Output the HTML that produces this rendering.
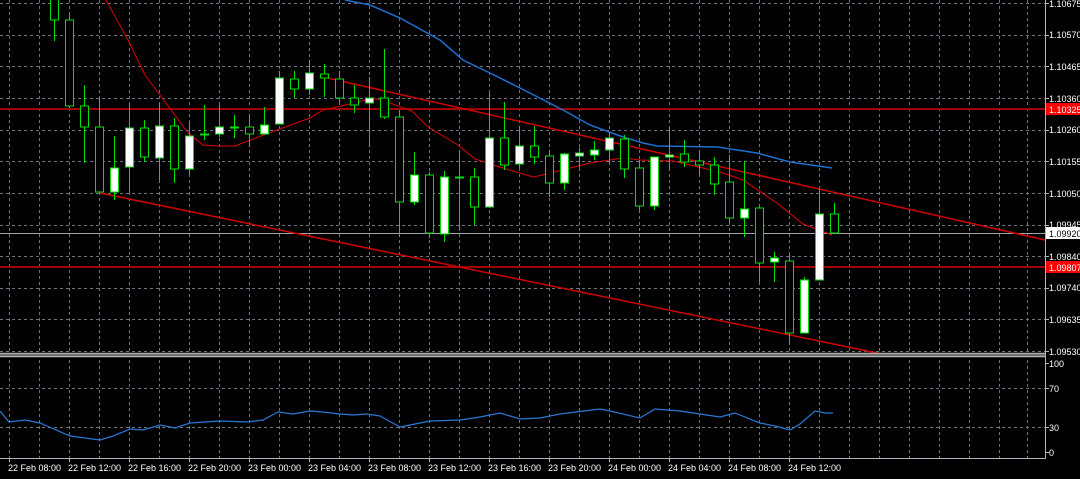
<!DOCTYPE html>
<html><head><meta charset="utf-8"><style>
html,body{margin:0;padding:0;background:#000;}
svg{display:block;}
text{font-family:"Liberation Sans",sans-serif;font-size:9px;fill:#fff;}
.t{font-size:9px;}
</style></head><body>
<svg width="1080" height="479" viewBox="0 0 1080 479" xmlns="http://www.w3.org/2000/svg">
<rect width="1080" height="479" fill="#000"/>
<g stroke="#6c7480" stroke-width="1" stroke-dasharray="3,3">
<path d="M0 3.5H1045M0 35.5H1045M0 66.5H1045M0 98.5H1045M0 130.5H1045M0 161.5H1045M0 193.5H1045M0 225.5H1045M0 256.5H1045M0 288.5H1045M0 319.5H1045M0 351.5H1045M0 388.5H1045M0 427.5H1045"/>
<path d="M9.5 0V458M39.5 0V458M69.5 0V458M99.5 0V458M129.5 0V458M159.5 0V458M189.5 0V458M219.5 0V458M249.5 0V458M279.5 0V458M309.5 0V458M339.5 0V458M369.5 0V458M399.5 0V458M429.5 0V458M459.5 0V458M489.5 0V458M519.5 0V458M549.5 0V458M579.5 0V458M609.5 0V458M639.5 0V458M669.5 0V458M699.5 0V458M729.5 0V458M759.5 0V458M789.5 0V458M819.5 0V458M849.5 0V458M879.5 0V458M909.5 0V458M939.5 0V458M969.5 0V458M999.5 0V458M1027.5 0V458"/>
</g>
<path d="M0 109H1045M0 267H1045" stroke="#a00000" stroke-width="2"/>
<path d="M0 233.5H1045" stroke="#a0a4a8" stroke-width="1"/>
<path d="M323 77L1045 240" stroke="#d00000" stroke-width="1.5" fill="none"/>
<path d="M100 193L882 354" stroke="#d00000" stroke-width="1.5" fill="none"/>
<path d="M345 0L370 5L400 18L440 40L463 60L490 73L520 88L563 110L590 125L623 137L643 143L657 146L717 147L757 153L790 162L832 168" stroke="#1e6fd0" stroke-width="1.5" fill="none"/>
<path d="M106 0L128 40L145 75L160 95L188 133L203 145L217 146L235 146L277 130L310 118L323 110L350 104L373 98L390 103L412 111L428 127L458 145L475 159L493 165L533 177L547 174L570 168L590 163L623 158L640 160L673 161L690 165L720 172L743 180L777 203L803 224L832 235" stroke="#e00000" stroke-width="1" fill="none"/>
<g stroke="#00e000" stroke-width="1">
<line x1="54.5" y1="0" x2="54.5" y2="41"/><rect x="50.5" y="-2" width="8" height="22" fill="#000"/>
<line x1="69.5" y1="15" x2="69.5" y2="108"/><rect x="65.5" y="20" width="8" height="86" fill="#000"/>
<line x1="84.5" y1="85" x2="84.5" y2="163"/><rect x="80.5" y="106" width="8" height="21" fill="#000"/>
<line x1="99.5" y1="98" x2="99.5" y2="192"/><rect x="95.5" y="127" width="8" height="65" fill="#000"/>
<line x1="114.5" y1="136" x2="114.5" y2="200"/><rect x="110.5" y="168" width="8" height="24" fill="#fff"/>
<line x1="129.5" y1="104" x2="129.5" y2="192"/><rect x="125.5" y="128" width="8" height="39" fill="#fff"/>
<line x1="144.5" y1="120" x2="144.5" y2="162"/><rect x="140.5" y="128" width="8" height="29" fill="#000"/>
<line x1="159.5" y1="103" x2="159.5" y2="180"/><rect x="155.5" y="126" width="8" height="32" fill="#fff"/>
<line x1="174.5" y1="118" x2="174.5" y2="183"/><rect x="170.5" y="126" width="8" height="43" fill="#000"/>
<line x1="189.5" y1="122" x2="189.5" y2="174"/><rect x="185.5" y="136" width="8" height="33" fill="#fff"/>
<line x1="204.5" y1="105" x2="204.5" y2="140"/><rect x="200.5" y="134" width="8" height="1" fill="#fff"/>
<line x1="219.5" y1="105" x2="219.5" y2="137"/><rect x="215.5" y="127" width="8" height="7" fill="#fff"/>
<line x1="234.5" y1="115" x2="234.5" y2="138"/><rect x="230.5" y="127" width="8" height="1" fill="#fff"/>
<line x1="249.5" y1="115" x2="249.5" y2="147"/><rect x="245.5" y="127" width="8" height="7" fill="#000"/>
<line x1="264.5" y1="107" x2="264.5" y2="134"/><rect x="260.5" y="125" width="8" height="9" fill="#fff"/>
<line x1="279.5" y1="71" x2="279.5" y2="124"/><rect x="275.5" y="78" width="8" height="46" fill="#fff"/>
<line x1="294.5" y1="71" x2="294.5" y2="98"/><rect x="290.5" y="79" width="8" height="10" fill="#000"/>
<line x1="309.5" y1="60" x2="309.5" y2="95"/><rect x="305.5" y="73" width="8" height="16" fill="#fff"/>
<line x1="324.5" y1="64" x2="324.5" y2="97"/><rect x="320.5" y="74" width="8" height="4" fill="#000"/>
<line x1="339.5" y1="71" x2="339.5" y2="103"/><rect x="335.5" y="79" width="8" height="19" fill="#000"/>
<line x1="354.5" y1="85" x2="354.5" y2="113"/><rect x="350.5" y="98" width="8" height="7" fill="#000"/>
<line x1="369.5" y1="77" x2="369.5" y2="147"/><rect x="365.5" y="98" width="8" height="5" fill="#fff"/>
<line x1="384.5" y1="49" x2="384.5" y2="119"/><rect x="380.5" y="98" width="8" height="19" fill="#000"/>
<line x1="399.5" y1="110" x2="399.5" y2="237"/><rect x="395.5" y="117" width="8" height="85" fill="#000"/>
<line x1="414.5" y1="152" x2="414.5" y2="205"/><rect x="410.5" y="175" width="8" height="27" fill="#fff"/>
<line x1="429.5" y1="172" x2="429.5" y2="238"/><rect x="425.5" y="175" width="8" height="58" fill="#000"/>
<line x1="444.5" y1="171" x2="444.5" y2="242"/><rect x="440.5" y="177" width="8" height="57" fill="#fff"/>
<line x1="459.5" y1="150" x2="459.5" y2="230"/><rect x="455.5" y="177" width="8" height="1" fill="#fff"/>
<line x1="474.5" y1="168" x2="474.5" y2="225"/><rect x="470.5" y="177" width="8" height="30" fill="#000"/>
<line x1="489.5" y1="93" x2="489.5" y2="208"/><rect x="485.5" y="138" width="8" height="69" fill="#fff"/>
<line x1="504.5" y1="102" x2="504.5" y2="170"/><rect x="500.5" y="138" width="8" height="27" fill="#000"/>
<line x1="519.5" y1="126" x2="519.5" y2="168"/><rect x="515.5" y="146" width="8" height="18" fill="#fff"/>
<line x1="534.5" y1="126" x2="534.5" y2="164"/><rect x="530.5" y="146" width="8" height="11" fill="#000"/>
<line x1="549.5" y1="150" x2="549.5" y2="197"/><rect x="545.5" y="156" width="8" height="27" fill="#000"/>
<line x1="564.5" y1="153" x2="564.5" y2="190"/><rect x="560.5" y="154" width="8" height="29" fill="#fff"/>
<line x1="579.5" y1="148" x2="579.5" y2="168"/><rect x="575.5" y="153" width="8" height="3" fill="#fff"/>
<line x1="594.5" y1="141" x2="594.5" y2="160"/><rect x="590.5" y="150" width="8" height="5" fill="#fff"/>
<line x1="609.5" y1="132" x2="609.5" y2="163"/><rect x="605.5" y="138" width="8" height="12" fill="#fff"/>
<line x1="624.5" y1="135" x2="624.5" y2="178"/><rect x="620.5" y="139" width="8" height="30" fill="#000"/>
<line x1="639.5" y1="160" x2="639.5" y2="210"/><rect x="635.5" y="168" width="8" height="38" fill="#000"/>
<line x1="654.5" y1="157" x2="654.5" y2="210"/><rect x="650.5" y="157" width="8" height="49" fill="#fff"/>
<line x1="669.5" y1="127" x2="669.5" y2="169"/><rect x="665.5" y="155" width="8" height="2" fill="#fff"/>
<line x1="684.5" y1="140" x2="684.5" y2="167"/><rect x="680.5" y="154" width="8" height="8" fill="#000"/>
<line x1="699.5" y1="150" x2="699.5" y2="175"/><rect x="695.5" y="161" width="8" height="4" fill="#000"/>
<line x1="714.5" y1="157" x2="714.5" y2="195"/><rect x="710.5" y="165" width="8" height="19" fill="#000"/>
<line x1="729.5" y1="155" x2="729.5" y2="223"/><rect x="725.5" y="182" width="8" height="36" fill="#000"/>
<line x1="744.5" y1="161" x2="744.5" y2="237"/><rect x="740.5" y="209" width="8" height="9" fill="#fff"/>
<line x1="759.5" y1="206" x2="759.5" y2="282"/><rect x="755.5" y="208" width="8" height="55" fill="#000"/>
<line x1="774.5" y1="252" x2="774.5" y2="282"/><rect x="770.5" y="258" width="8" height="4" fill="#fff"/>
<line x1="789.5" y1="254" x2="789.5" y2="343"/><rect x="785.5" y="261" width="8" height="72" fill="#000"/>
<line x1="804.5" y1="277" x2="804.5" y2="333"/><rect x="800.5" y="280" width="8" height="53" fill="#fff"/>
<line x1="819.5" y1="189" x2="819.5" y2="280"/><rect x="815.5" y="214" width="8" height="66" fill="#fff"/>
<line x1="834.5" y1="203" x2="834.5" y2="233"/><rect x="830.5" y="214" width="8" height="19" fill="#000"/>
</g>
<path d="M0 353.5H1045M0 356.5H1045" stroke="#b0b0b0" stroke-width="1.5"/>
<rect x="0" y="354" width="1045" height="2" fill="#707070"/>
<path d="M0 411L9 422L25 420L40 423L70 436L100 440L113 436L130 429L143 430L160 425L175 428L190 423L220 421L247 422L263 420L278 412L293 414L310 411L323 412L340 414L353 415L367 414L380 416L400 427L410 425L430 421L460 420L480 417L500 413L520 419L540 418L560 414L600 409L610 411L640 418L655 409L680 411L700 414L720 417L735 413L760 423L775 426L790 430L800 424L815 411L825 413L833 413" stroke="#2a78d6" stroke-width="1.2" fill="none"/>
<path d="M1045.5 0V458M0 458.5H1046" stroke="#b0b4b8" stroke-width="1"/>
<g stroke="#b0b4b8"><path d="M1045 3.5h4M1045 35.5h4M1045 66.5h4M1045 98.5h4M1045 130.5h4M1045 161.5h4M1045 193.5h4M1045 225.5h4M1045 256.5h4M1045 288.5h4M1045 319.5h4M1045 351.5h4M1045 363.5h4M1045 388.5h4M1045 427.5h4M1045 452.5h4"/></g>
<g>
<text x="1049" y="7">1.10675</text>
<text x="1049" y="38">1.10570</text>
<text x="1049" y="70">1.10465</text>
<text x="1049" y="102">1.10360</text>
<text x="1049" y="133">1.10260</text>
<text x="1049" y="165">1.10155</text>
<text x="1049" y="197">1.10050</text>
<text x="1049" y="228">1.09945</text>
<text x="1049" y="260">1.09840</text>
<text x="1049" y="291">1.09740</text>
<text x="1049" y="323">1.09635</text>
<text x="1049" y="355">1.09530</text>
<text x="1049" y="367">100</text>
<text x="1049" y="392">70</text>
<text x="1049" y="431">30</text>
<text x="1049" y="456">0</text>
</g>
<rect x="1046" y="103" width="34" height="12" fill="#f00"/>
<text x="1049" y="113">1.10325</text>
<rect x="1046" y="261" width="34" height="12" fill="#f00"/>
<text x="1049" y="271">1.09807</text>
<rect x="1046" y="227" width="34" height="12" fill="#fff"/>
<text x="1049" y="237" style="fill:#000">1.09920</text>
<g>
<text class="t" x="8" y="471">22 Feb 08:00</text>
<text class="t" x="68" y="471">22 Feb 12:00</text>
<text class="t" x="128" y="471">22 Feb 16:00</text>
<text class="t" x="188" y="471">22 Feb 20:00</text>
<text class="t" x="248" y="471">23 Feb 00:00</text>
<text class="t" x="308" y="471">23 Feb 04:00</text>
<text class="t" x="368" y="471">23 Feb 08:00</text>
<text class="t" x="428" y="471">23 Feb 12:00</text>
<text class="t" x="488" y="471">23 Feb 16:00</text>
<text class="t" x="548" y="471">23 Feb 20:00</text>
<text class="t" x="608" y="471">24 Feb 00:00</text>
<text class="t" x="668" y="471">24 Feb 04:00</text>
<text class="t" x="728" y="471">24 Feb 08:00</text>
<text class="t" x="788" y="471">24 Feb 12:00</text>
</g>
<g stroke="#b0b4b8"><path d="M9.5 458v4M69.5 458v4M129.5 458v4M189.5 458v4M249.5 458v4M309.5 458v4M369.5 458v4M429.5 458v4M489.5 458v4M549.5 458v4M609.5 458v4M669.5 458v4M729.5 458v4M789.5 458v4"/></g>
</svg>
</body></html>
